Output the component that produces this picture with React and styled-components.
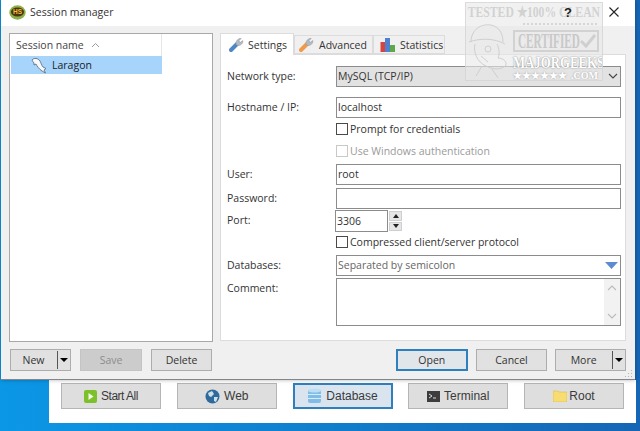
import React from 'react';
import styled, { createGlobalStyle } from 'styled-components';

const Global = createGlobalStyle`
  html, body { margin: 0; padding: 0; width: 640px; height: 431px; overflow: hidden; }
  body { font-family: "Open Sans", "Noto Sans", sans-serif; font-size: 10.5px; color: #333; }
  * { box-sizing: border-box; }
`;

const Desktop = styled.div`
  position: relative; width: 640px; height: 431px; overflow: hidden;
  background: linear-gradient(90deg, #0b97e6 0, #1566b5 100%);
  display: flex; flex-direction: column;
`;
const Dialog = styled.div`
  position: relative; flex: none;
  width: 634px; height: 380px; margin-left: 1px; background: #f0f0f0;
  border-bottom: 1px solid #80868a; display: flex; flex-direction: column;
  box-shadow: 0 0 4px rgba(0,0,0,.3);
`;
const TitleBar = styled.div`
  height: 26px; flex: none; background: #fff; display: flex; align-items: center; padding: 0 0 2px 8px; gap: 4px;
  font-size: 10.5px; color: #333;
`;
const TitleText = styled.span` flex: 1; `;
const TitleBtn = styled.span`
  position: relative; z-index: 4; width: 42px; display: flex; justify-content: center; font-size: 13px; font-weight: bold; color: #222; font-family: "Liberation Sans", sans-serif;
`;
const Body = styled.div`
  flex: 1; display: flex; gap: 7px; padding: 7px 9px 0 8px; min-height: 0;
`;
const LeftCol = styled.div` width: 204px; flex: none; display: flex; flex-direction: column; `;
const ListBox = styled.div`
  height: 309px; background: #fff; border: 1px solid #a8a8a8;
`;
const ListHead = styled.div`
  width: 152px; height: 22px; display: flex; align-items: center; gap: 7px; padding-left: 6px; border-right: 1px solid #e6e6e6; color: #444;
`;
const ListRow = styled.div`
  width: 151px; height: 18px; margin-left: 1px; background: #a6d4fb; display: flex; align-items: center; gap: 5px; padding-left: 20px; color: #222;
`;
const RightCol = styled.div` flex: 1; display: flex; flex-direction: column; min-width: 0; `;
const Tabs = styled.div` height: 21px; display: flex; align-items: flex-end; flex: none; `;
const Tab = styled.div`
  position: relative; z-index: ${p => p.$active ? 1 : 0};
  height: ${p => p.$active ? 22 : 19}px; margin-bottom: ${p => p.$active ? -1 : 0}px;
  width: ${p => p.$w}px; background: ${p => p.$active ? '#fff' : '#f0f0f0'};
  border: 1px solid #dcdcdc; ${p => p.$active ? 'border-bottom: none;' : ''}
  display: flex; align-items: center; gap: ${p => p.$gap}px; padding-left: ${p => p.$pl}px; color: #333;
`;
const Page = styled.div`
  height: 287px; flex: none; background: #fff; border: 1px solid #dcdcdc; padding: 0 4px 0 6px;
`;
const FormRow = styled.div`
  height: ${p => p.$h}px; margin-top: ${p => p.$mt || 0}px; display: grid; grid-template-columns: 109px 1fr; align-items: ${p => p.$top ? 'start' : 'center'};
`;
const Label = styled.span` color: #333; padding-top: ${p => p.$top ? 3 : 0}px; padding-bottom: ${p => p.$top ? 0 : 2}px; `;
const Field = styled.div`
  height: ${p => p.$h || 21}px; width: ${p => p.$w ? p.$w + 'px' : '100%'}; border: 1px solid #8c8c8c; background: ${p => p.$bg || '#fff'}; color: ${p => p.$muted ? '#666' : '#333'};
  display: flex; align-items: center; justify-content: space-between; padding: 0 2px 1px 1px; position: relative; white-space: nowrap;
`;
const Check = styled.div`
  display: flex; align-items: center; gap: 2px; color: ${p => p.$off ? '#9a9a9a' : '#333'};
`;
const Box = styled.span`
  width: 12px; height: 12px; border: 1px solid ${p => p.$off ? '#c8c8c8' : '#4a4a4a'}; background: #fff; display: block;
`;
const SpinWrap = styled.div` display: flex; align-items: center; gap: 1px; margin-left: -1px; `;
const Spin = styled.div` width: 13px; height: 20px; display: flex; flex-direction: column; gap: 1px; `;
const SpinBtn = styled.span`
  flex: 1; background: #e6e6e6; border: 1px solid #cfcfcf; display: flex; align-items: center; justify-content: center;
`;
const Scroll = styled.div`
  position: absolute; right: 0; top: 0; bottom: 0; width: 16px; background: #f2f2f2; display: flex; flex-direction: column; justify-content: space-between; align-items: center; padding: 6px 0;
`;
const ButtonRow = styled.div` display: flex; padding-top: ${p => p.$pt}px; `;
const Btn = styled.div`
  width: ${p => p.$w}px; height: 22px; margin-left: ${p => p.$ml || 0}px;
  background: ${p => p.$off ? '#cccccc' : p.$def ? '#e1e6ea' : '#e1e1e1'};
  border: ${p => p.$def ? '2px solid #2f7fbd' : p.$off ? '1px solid #c4c4c4' : '1px solid #adadad'}; color: ${p => p.$off ? '#8c8c8c' : '#333'};
  display: flex; align-items: center; justify-content: center; position: relative; ${p => p.$split ? 'padding-right: 14px;' : ''}
`;
const SplitPart = styled.span`
  position: absolute; right: 0; top: 1px; bottom: 1px; width: 13px; border-left: 1px solid #555; display: flex; align-items: center; justify-content: center;
  &::after { content: ''; border: 4px solid transparent; border-top: 4px solid #000; border-bottom: none; }
`;
const Grip = styled.svg` position: absolute; right: 2px; bottom: 1px; `;
const Launcher = styled.div`
  height: 43px; margin-left: 49px; width: 587px; background: #fff; flex: none; display: flex; padding: 3px 0 0 12px; gap: 15.75px; align-items: flex-start;
`;
const LaunchBtn = styled.div`
  width: 100px; height: 26px; background: ${p => p.$def ? '#d9e4ee' : '#dedede'}; border: ${p => p.$def ? '2px solid #2f7fbd' : '1px solid #b5b5b5'};
  display: flex; align-items: center; justify-content: center; gap: ${p => p.$gap ?? 4}px; color: #3a3a3a; font-family: "Liberation Sans", sans-serif; font-size: 12px;
  letter-spacing: ${p => p.$tight ? -0.5 : 0}px;
`;
const Watermark = styled.div`
  position: absolute; left: 465px; top: 2px; width: 138px; height: 79px; z-index: 3; background: rgba(232,232,232,.6); border: 1px solid rgba(205,205,205,.6);
  font-family: "Liberation Serif", serif; font-weight: bold; color: #d2d2d2; display: flex; flex-direction: column; line-height: 1; overflow: hidden;
`;
const WmTop = styled.span`
  font-size: 15px; height: 16px; margin-top: 2px; white-space: nowrap; align-self: center; transform: scaleX(.78); transform-origin: center;
`;
const WmLower = styled.div` display: flex; flex: 1; gap: 3px; padding: 0 2px 0 2px; `;
const WmRight = styled.div` flex: 1; display: flex; flex-direction: column; min-width: 0; `;
const Dashes = styled.div` height: 7px; margin: 3px 3px 0 10px; border-top: 2px dotted #d6d6d6; `;
const Stamp = styled.div`
  height: 22px; border: 2px solid #d2d2d2; display: flex; align-items: center; justify-content: space-between; padding: 0 2px 0 3px; margin-right: 1px; color: #c8c8c8;
`;
const StampText = styled.span` font-size: 20px; width: 62px; transform: scaleX(.56); transform-origin: left center; white-space: nowrap; `;
const Major = styled.span` font-size: 16px; color: #fff; margin-top: 3px; white-space: nowrap; transform: scaleX(.8); transform-origin: left center; text-shadow: 0 0 2px #999, 0 0 1px #999; `;
const Stars = styled.div` display: flex; justify-content: space-between; align-items: center; color: #fff; font-size: 10px; margin-top: 0; padding-right: 2px; text-shadow: 0 0 2px #999; white-space: nowrap; `;

const Wrench = ({ c = '#4f86c6' }) => (
  <svg width="16" height="16" viewBox="0 0 16 16">
    <path d="M3 13 L9 7" stroke={c} strokeWidth="4" strokeLinecap="round" fill="none" />
    <path d="M8 7.5 C7.4 4 10 1.2 13.2 1.4 L10.9 3.8 L12.2 5.4 L14.8 3.6 C15.2 6.8 12.2 9 9.6 8.4Z" fill="#b4b9c0" stroke="#8a9099" strokeWidth=".5" />
  </svg>
);
const Bars = () => (
  <svg width="16" height="15" viewBox="0 0 16 15"><rect x="0.5" y="5" width="4.5" height="10" fill="#d8433c"/><rect x="5" y="1" width="5" height="14" fill="#4f7fd0"/><rect x="10" y="8" width="5" height="7" fill="#5ca84a"/></svg>
);
const Logo = () => (
  <svg width="17" height="15" viewBox="0 0 17 15"><ellipse cx="8.5" cy="7.5" rx="8.2" ry="7.2" fill="#8cb04a"/><ellipse cx="8.5" cy="7" rx="6.5" ry="4.6" fill="#4a3414"/><text x="8.5" y="9.4" fontSize="6.5" fontWeight="bold" textAnchor="middle" fill="#f0c030" fontFamily="Liberation Sans">HS</text></svg>
);
const Dolphin = () => (
  <svg width="16" height="17" viewBox="0 0 16 17"><path d="M1 3 C3 .5 7 1 9 4 C10 6 10.5 8 12 10 L15 11.5 L13 13 L14.5 16 L11 14 C8 12 6 9 5 7 L3 8 L3 6 C2 5 1.5 4 1 3Z" fill="#f6f8f9" stroke="#55677a" strokeWidth=".8"/></svg>
);
const Caret = () => (
  <svg width="9" height="6" viewBox="0 0 9 6"><path d="M1 5 L4.5 1.5 L8 5" fill="none" stroke="#9a9a9a" strokeWidth="1"/></svg>
);
const Chevron = ({ up, c = '#444' }) => (
  <svg width="10" height="6" viewBox="0 0 10 6"><path d={up ? 'M1 5 L5 1 L9 5' : 'M1 1 L5 5 L9 1'} fill="none" stroke={c} strokeWidth="1.1"/></svg>
);
const CloseX = () => (
  <svg width="10" height="10" viewBox="0 0 10 10"><path d="M.5 .5 L9.5 9.5 M9.5 .5 L.5 9.5" stroke="#222" strokeWidth="1.1" fill="none"/></svg>
);
const Tri = ({ up }) => (
  <svg width="6" height="4" viewBox="0 0 6 4"><path d={up ? 'M0 4 L3 0 L6 4Z' : 'M0 0 L3 4 L6 0Z'} fill="#222"/></svg>
);
const Play = () => (
  <svg width="13" height="13" viewBox="0 0 13 13"><rect width="13" height="13" rx="2" fill="#7cc02c"/><path d="M4.5 3 L9.5 6.5 L4.5 10Z" fill="#f4f8e8"/></svg>
);
const Globe = () => (
  <svg width="15" height="15" viewBox="0 0 15 15"><circle cx="7.5" cy="7.5" r="7" fill="#2f6a9c"/><path d="M3 4 L7 2 L9 5 L6 8 L4 7Z M9 8 L13 8 L11 13 L9 12Z" fill="#cfe0ea"/></svg>
);
const Db = () => (
  <svg width="15" height="17" viewBox="0 0 15 17"><rect x="1" y="2" width="13" height="13" rx="2" fill="#7fbde8"/><path d="M1 6.5 H14 M1 10.5 H14" stroke="#d6ecfa" strokeWidth="1.2"/><ellipse cx="7.5" cy="2.5" rx="6.5" ry="2" fill="#b9def5"/></svg>
);
const Term = () => (
  <svg width="13" height="11" viewBox="0 0 13 11"><rect width="13" height="11" fill="#3d3d3d"/><path d="M2 3 L5 5 L2 7 M6 7 H9" stroke="#ddd" fill="none"/></svg>
);
const Folder = () => (
  <svg width="14" height="12" viewBox="0 0 14 12"><path d="M0 1 H5 L6 2 H14 V12 H0Z" fill="#f7dc72" stroke="#dcbc48" strokeWidth=".6"/></svg>
);
const DropTri = () => (
  <svg width="13" height="7" viewBox="0 0 13 7"><path d="M0 0 H13 L6.5 7Z" fill="#5b8bd0"/></svg>
);
const Mascot = () => (
  <svg width="42" height="60" viewBox="0 0 42 60" style={{ flex: 'none' }}>
    <g fill="none" stroke="#cfcfcf" strokeWidth="1">
      <path d="M3 22 C3 8 16 2 26 6 C33 9 35 16 35 22" />
      <path d="M1 22 C12 18 26 18 37 24" />
      <path d="M7 24 C5 32 9 42 18 46 C26 50 34 50 38 45 C39 40 33 38 30 38 C32 34 31 28 29 24" />
      <circle cx="20" cy="29" r="3" />
      <path d="M14 46 L8 56 M24 49 L30 58 M13 36 L20 42" />
    </g>
  </svg>
);
const Tick = () => (
  <svg width="16" height="14" viewBox="0 0 16 14" style={{ flex: 'none' }}><path d="M1 7 L6 12 L15 1" fill="none" stroke="#cfcfcf" strokeWidth="3"/></svg>
);

export default function App() {
  return (
    <Desktop>
      <Global />
      <Dialog>
        <TitleBar>
          <Logo />
          <TitleText>Session manager</TitleText>
          <TitleBtn>?</TitleBtn>
          <TitleBtn><CloseX /></TitleBtn>
        </TitleBar>
        <Body>
          <LeftCol>
            <ListBox>
              <ListHead>Session name <Caret /></ListHead>
              <ListRow><Dolphin />Laragon</ListRow>
            </ListBox>
            <ButtonRow $pt={7}>
              <Btn $w={61} $ml={1} $split>New<SplitPart /></Btn>
              <Btn $w={62} $ml={9} $off>Save</Btn>
              <Btn $w={61} $ml={9}>Delete</Btn>
            </ButtonRow>
          </LeftCol>
          <RightCol>
            <Tabs>
              <Tab $active $w={74} $pl={7} $gap={4}><Wrench />Settings</Tab>
              <Tab $w={79} $pl={3} $gap={5}><Wrench c="#f09a4a" />Advanced</Tab>
              <Tab $w={72} $pl={6} $gap={4}><Bars />Statistics</Tab>
            </Tabs>
            <Page>
              <FormRow $h={21} $mt={11}>
                <Label>Network type:</Label>
                <Field $bg="#e2e2e2">MySQL (TCP/IP)<Chevron /></Field>
              </FormRow>
              <FormRow $h={21} $mt={10}>
                <Label>Hostname / IP:</Label>
                <Field>localhost</Field>
              </FormRow>
              <FormRow $h={20} $mt={1}>
                <span /><Check><Box />Prompt for credentials</Check>
              </FormRow>
              <FormRow $h={20} $mt={2}>
                <span /><Check $off><Box $off />Use Windows authentication</Check>
              </FormRow>
              <FormRow $h={21} $mt={3}>
                <Label>User:</Label>
                <Field>root</Field>
              </FormRow>
              <FormRow $h={21} $mt={3}>
                <Label>Password:</Label>
                <Field />
              </FormRow>
              <FormRow $h={22} $mt={1}>
                <Label>Port:</Label>
                <SpinWrap>
                  <Field $w={53} $h={22}>3306</Field>
                  <Spin><SpinBtn><Tri up /></SpinBtn><SpinBtn><Tri /></SpinBtn></Spin>
                </SpinWrap>
              </FormRow>
              <FormRow $h={20}>
                <span /><Check><Box />Compressed client/server protocol</Check>
              </FormRow>
              <FormRow $h={21} $mt={3}>
                <Label>Databases:</Label>
                <Field $muted>Separated by semicolon<DropTri /></Field>
              </FormRow>
              <FormRow $h={48} $mt={2} $top>
                <Label $top>Comment:</Label>
                <Field $h={48}><Scroll><Chevron up c="#bbb" /><Chevron c="#bbb" /></Scroll></Field>
              </FormRow>
            </Page>
            <ButtonRow $pt={8}>
              <Btn $w={72} $ml={176} $def>Open</Btn>
              <Btn $w={72} $ml={8}>Cancel</Btn>
              <Btn $w={71} $ml={8} $split>More<SplitPart /></Btn>
            </ButtonRow>
          </RightCol>
        </Body>
        <Grip width="9" height="9" viewBox="0 0 9 9"><path d="M7 1h1v1H7zM4 4h1v1H4zM7 4h1v1H7zM1 7h1v1H1zM4 7h1v1H4zM7 7h1v1H7z" fill="#b5b5b5"/></Grip>
      </Dialog>
      <Launcher>
        <LaunchBtn $tight><Play />Start All</LaunchBtn>
        <LaunchBtn><Globe />Web</LaunchBtn>
        <LaunchBtn $def><Db />Database</LaunchBtn>
        <LaunchBtn><Term />Terminal</LaunchBtn>
        <LaunchBtn $gap={2}><Folder />Root</LaunchBtn>
      </Launcher>
      <Watermark>
        <WmTop>TESTED ★100% CLEAN</WmTop>
        <WmLower>
          <Mascot />
          <WmRight>
            <Dashes />
            <Stamp><StampText>CERTIFIED</StampText><Tick /></Stamp>
            <Major>MAJORGEEKS</Major>
            <Stars><span>★★★★★★</span><span>.COM</span></Stars>
          </WmRight>
        </WmLower>
      </Watermark>
    </Desktop>
  );
}
